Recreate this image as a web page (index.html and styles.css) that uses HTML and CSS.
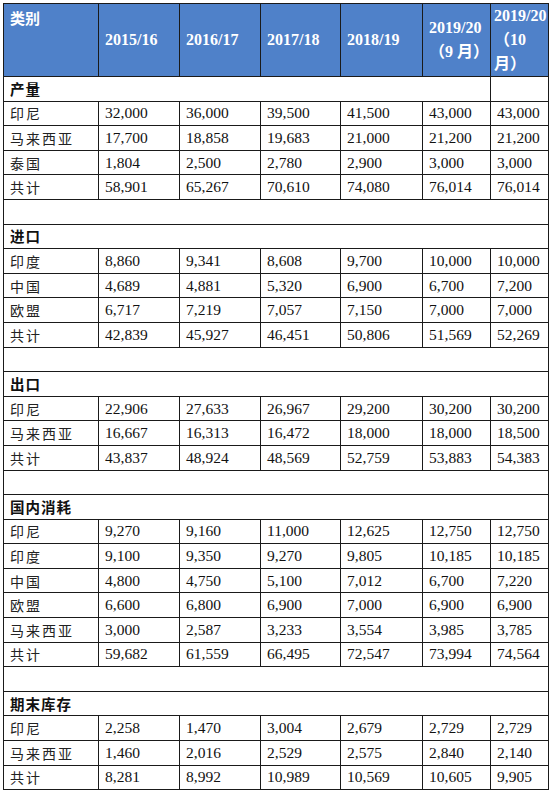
FILE: index.html
```html
<!DOCTYPE html>
<html lang="zh">
<head>
<meta charset="utf-8">
<link rel="stylesheet" href="styles.css">
</head>
<body>
<table class="t">
<colgroup>
<col class="c1"><col class="c2"><col class="c3"><col class="c4"><col class="c5"><col class="c6"><col class="c7">
</colgroup>
<thead>
<tr class="head">
<th class="cat">类别</th>
<th>2015/16</th>
<th>2016/17</th>
<th>2017/18</th>
<th>2018/19</th>
<th>2019/20<br><span class="cn">（9 月）</span></th>
<th class="last">2019/20<br><span class="cn">（10</span><br><span class="cn">月）</span></th>
</tr>
</thead>
<tbody>
<tr class="sec"><td colspan="6">产量</td><td></td></tr>
<tr><td class="nm">印尼</td><td>32,000</td><td>36,000</td><td>39,500</td><td>41,500</td><td>43,000</td><td>43,000</td></tr>
<tr><td class="nm">马来西亚</td><td>17,700</td><td>18,858</td><td>19,683</td><td>21,000</td><td>21,200</td><td>21,200</td></tr>
<tr><td class="nm">泰国</td><td>1,804</td><td>2,500</td><td>2,780</td><td>2,900</td><td>3,000</td><td>3,000</td></tr>
<tr><td class="nm">共计</td><td>58,901</td><td>65,267</td><td>70,610</td><td>74,080</td><td>76,014</td><td>76,014</td></tr>
<tr class="blank"><td colspan="7"></td></tr>
<tr class="sec"><td colspan="7">进口</td></tr>
<tr><td class="nm">印度</td><td>8,860</td><td>9,341</td><td>8,608</td><td>9,700</td><td>10,000</td><td>10,000</td></tr>
<tr><td class="nm">中国</td><td>4,689</td><td>4,881</td><td>5,320</td><td>6,900</td><td>6,700</td><td>7,200</td></tr>
<tr><td class="nm">欧盟</td><td>6,717</td><td>7,219</td><td>7,057</td><td>7,150</td><td>7,000</td><td>7,000</td></tr>
<tr><td class="nm">共计</td><td>42,839</td><td>45,927</td><td>46,451</td><td>50,806</td><td>51,569</td><td>52,269</td></tr>
<tr class="blank"><td colspan="7"></td></tr>
<tr class="sec"><td colspan="7">出口</td></tr>
<tr><td class="nm">印尼</td><td>22,906</td><td>27,633</td><td>26,967</td><td>29,200</td><td>30,200</td><td>30,200</td></tr>
<tr><td class="nm">马来西亚</td><td>16,667</td><td>16,313</td><td>16,472</td><td>18,000</td><td>18,000</td><td>18,500</td></tr>
<tr><td class="nm">共计</td><td>43,837</td><td>48,924</td><td>48,569</td><td>52,759</td><td>53,883</td><td>54,383</td></tr>
<tr class="blank"><td colspan="7"></td></tr>
<tr class="sec"><td colspan="7">国内消耗</td></tr>
<tr><td class="nm">印尼</td><td>9,270</td><td>9,160</td><td>11,000</td><td>12,625</td><td>12,750</td><td>12,750</td></tr>
<tr><td class="nm">印度</td><td>9,100</td><td>9,350</td><td>9,270</td><td>9,805</td><td>10,185</td><td>10,185</td></tr>
<tr><td class="nm">中国</td><td>4,800</td><td>4,750</td><td>5,100</td><td>7,012</td><td>6,700</td><td>7,220</td></tr>
<tr><td class="nm">欧盟</td><td>6,600</td><td>6,800</td><td>6,900</td><td>7,000</td><td>6,900</td><td>6,900</td></tr>
<tr><td class="nm">马来西亚</td><td>3,000</td><td>2,587</td><td>3,233</td><td>3,554</td><td>3,985</td><td>3,785</td></tr>
<tr><td class="nm">共计</td><td>59,682</td><td>61,559</td><td>66,495</td><td>72,547</td><td>73,994</td><td>74,564</td></tr>
<tr class="blank"><td colspan="7"></td></tr>
<tr class="sec"><td colspan="7">期末库存</td></tr>
<tr><td class="nm">印尼</td><td>2,258</td><td>1,470</td><td>3,004</td><td>2,679</td><td>2,729</td><td>2,729</td></tr>
<tr><td class="nm">马来西亚</td><td>1,460</td><td>2,016</td><td>2,529</td><td>2,575</td><td>2,840</td><td>2,140</td></tr>
<tr><td class="nm">共计</td><td>8,281</td><td>8,992</td><td>10,989</td><td>10,569</td><td>10,605</td><td>9,905</td></tr>
</tbody>
</table>
</body>
</html>
```
FILE: styles.css
```css
html, body {
  margin: 0;
  padding: 0;
  background: #ffffff;
  overflow: hidden;
}
body {
  padding: 3px 0 0 3px;
  font-family: "Liberation Serif", "Noto Sans CJK SC", serif;
  color: #111;
}
.t {
  border-collapse: collapse;
  table-layout: fixed;
  width: 545px;
}
.c1 { width: 95px; }
.c2 { width: 81px; }
.c3 { width: 81px; }
.c4 { width: 80px; }
.c5 { width: 82px; }
.c6 { width: 68px; }
.c7 { width: 58px; }
.t td, .t th {
  border: 1.5px solid #1a1a1a;
  padding: 0 0 0 6px;
  height: 23.6px;
  font-size: 15.5px;
  line-height: 18px;
  text-align: left;
  vertical-align: middle;
  white-space: nowrap;
}
.head th {
  height: 68px;
  background: #4f81c9;
  color: #ffffff;
  font-weight: 700;
  font-size: 16px;
  line-height: 24px;
  overflow: visible;
}
.head th.cat {
  vertical-align: top;
  padding-top: 2px;
  font-family: "Noto Sans CJK SC", sans-serif;
  font-size: 15px;
}
.head th.last {
  padding-left: 3px;
}
.cn {
  font-family: "Liberation Serif", "Noto Sans CJK SC", serif;
  font-weight: 700;
}
.nm {
  font-family: "Noto Sans CJK SC", sans-serif;
  font-size: 14px !important;
  letter-spacing: 2px;
  color: #222;
}
.sec td {
  font-family: "Noto Sans CJK SC", sans-serif;
  font-weight: 700;
  font-size: 14.5px;
  letter-spacing: 1px;
}
```
